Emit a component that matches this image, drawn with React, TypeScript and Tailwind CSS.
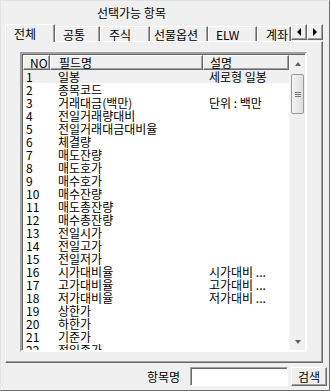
import React from "react";

const rows: [string, string, string][] = [
  ["1", "일봉", "세로형 일봉"],
  ["2", "종목코드", ""],
  ["3", "거래대금(백만)", "단위 : 백만"],
  ["4", "전일거래량대비", ""],
  ["5", "전일거래대금대비율", ""],
  ["6", "체결량", ""],
  ["7", "매도잔량", ""],
  ["8", "매도호가", ""],
  ["9", "매수호가", ""],
  ["10", "매수잔량", ""],
  ["11", "매도총잔량", ""],
  ["12", "매수총잔량", ""],
  ["13", "전일시가", ""],
  ["14", "전일고가", ""],
  ["15", "전일저가", ""],
  ["16", "시가대비율", "시가대비 ..."],
  ["17", "고가대비율", "고가대비 ..."],
  ["18", "저가대비율", "저가대비 ..."],
  ["19", "상한가", ""],
  ["20", "하한가", ""],
  ["21", "기준가", ""],
  ["22", "전일종가", ""],
];

const tabs = [
  { label: "공통", w: "w-[45px]", pl: "pl-[7px]" },
  { label: "주식", w: "w-[50px]", pl: "pl-[8px]" },
  { label: "선물옵션", w: "w-[58px]", pl: "pl-[3px]" },
  { label: "ELW", w: "w-[49px]", pl: "pl-[7px]" },
  { label: "계좌", w: "w-[34px]", pl: "pl-[8px]" },
];

function HeaderCell({ w, pl, children }: { w: string; pl: string; children: React.ReactNode }) {
  return (
    <div
      className={`${w} ${pl} h-full shrink-0 bg-[#f0f0f0] border-t border-l border-t-white border-l-white border-r border-b border-r-[#696969] border-b-[#696969] shadow-[inset_-1px_-1px_0_#a0a0a0] flex items-center`}
    >
      {children}
    </div>
  );
}

export default function App() {
  return (
    <div className="w-[330px] h-[391px] bg-[#f0f0f0] border-l border-t border-l-[#e3e3e3] border-t-[#e3e3e3] border-r border-b border-r-[#6d6d6d] border-b-[#6d6d6d] flex flex-col text-[12px] leading-[13px] text-black font-['Noto_Sans_CJK_KR','Liberation_Sans',sans-serif] overflow-hidden">
      <div className="h-[23px] shrink-0 pl-[96px] pt-[5px]">선택가능 항목</div>

      {/* tabs */}
      <div className="h-[17px] shrink-0 flex items-end pl-[4px] relative z-10">
        <div className="w-[50px] h-[18px] mb-[-1px] bg-[#f0f0f0] border-t border-l border-white border-r border-r-[#696969] shadow-[inset_-1px_0_0_#a0a0a0] pl-[8px] flex items-center">
          전체
        </div>
        {tabs.map((t) => (
          <div
            key={t.label}
            className={`${t.w} ${t.pl} h-[15px] shrink-0 whitespace-nowrap border-t border-t-white border-l border-l-white border-r border-r-[#696969] shadow-[inset_-1px_0_0_#a0a0a0] flex items-center`}
          >
            {t.label}
          </div>
        ))}
        <div className="flex self-start">
          {["l", "r"].map((d) => (
            <div
              key={d}
              className="w-[16px] h-[16px] bg-[#f0f0f0] border-t border-l border-white border-r border-b border-r-[#696969] border-b-[#696969] shadow-[inset_-1px_-1px_0_#a0a0a0] flex items-center justify-center"
            >
              {d === "l" ? (
                <div className="w-0 h-0 border-y-[4px] border-y-transparent border-r-[4px] border-r-black" />
              ) : (
                <div className="w-0 h-0 border-y-[4px] border-y-transparent border-l-[4px] border-l-black" />
              )}
            </div>
          ))}
        </div>
      </div>

      {/* tab panel */}
      <div className="ml-[4px] w-[318px] h-[322px] shrink-0 border-t border-l border-white border-r border-b border-r-[#696969] border-b-[#696969] shadow-[inset_-1px_-1px_0_#a0a0a0] pt-[10px] pl-[14px]">
        <div className="w-[287px] h-[300px] border-2 border-t-[#a0a0a0] border-l-[#a0a0a0] border-r-white border-b-white shadow-[inset_1px_1px_0_#696969] bg-white flex">
          <div className="flex-1 flex flex-col overflow-hidden pl-[1px] pt-[1px]">
            <div className="h-[15px] shrink-0 flex">
              <HeaderCell w="w-[27px]" pl="pl-[6px]">NO</HeaderCell>
              <HeaderCell w="w-[153px]" pl="pl-[8px]">필드명</HeaderCell>
              <HeaderCell w="w-[86px]" pl="pl-[6px]">설명</HeaderCell>
            </div>
            <div className="flex flex-col">
              {rows.map(([no, name, desc], i) => (
                <div
                  key={no}
                  className={`h-[13px] shrink-0 flex whitespace-nowrap ${i === 0 ? "bg-[#f0f0f0]" : ""}`}
                >
                  <div className="w-[27px] pl-[3px] shrink-0">{no}</div>
                  <div className="w-[153px] pl-[8px] shrink-0">{name}</div>
                  <div className="w-[86px] pl-[6px] shrink-0">{desc}</div>
                </div>
              ))}
            </div>
          </div>

          {/* scrollbar */}
          <div className="w-[16px] shrink-0 bg-[#f0f0f0] border-l border-[#f7f7f7] flex flex-col mt-[1px]">
            <div className="h-[17px] shrink-0 flex items-center justify-center">
              <div className="w-0 h-0 border-x-[3px] border-x-transparent border-b-[4px] border-b-[#606060]" />
            </div>
            <div className="h-[40px] mt-[2px] mx-[1px] rounded-[2px] border border-[#9a9a9a] bg-gradient-to-r from-[#f4f4f4] to-[#dedede] flex flex-col items-center justify-center gap-[1px]">
              <div className="w-[6px] h-[1px] bg-[#7a7a7a]" />
              <div className="w-[6px] h-[1px] bg-[#7a7a7a]" />
              <div className="w-[6px] h-[1px] bg-[#7a7a7a]" />
            </div>
            <div className="flex-1" />
            <div className="h-[17px] shrink-0 flex items-center justify-center">
              <div className="w-0 h-0 border-x-[3px] border-x-transparent border-t-[4px] border-t-[#606060]" />
            </div>
          </div>
        </div>
      </div>

      {/* bottom bar */}
      <div className="flex-1 flex items-center">
        <div className="ml-[146px] w-[36px] whitespace-nowrap">항목명</div>
        <div className="ml-[7px] w-[98px] h-[19px] bg-white border-t border-l border-[#a0a0a0] border-r border-b border-r-white border-b-white shadow-[inset_1px_1px_0_#696969]" />
        <div className="ml-[3px] w-[36px] h-[19px] bg-[#f0f0f0] border-t border-l border-white border-r border-b border-r-[#696969] border-b-[#696969] shadow-[inset_-1px_-1px_0_#a0a0a0] flex items-center justify-center">
          검색
        </div>
      </div>
    </div>
  );
}
